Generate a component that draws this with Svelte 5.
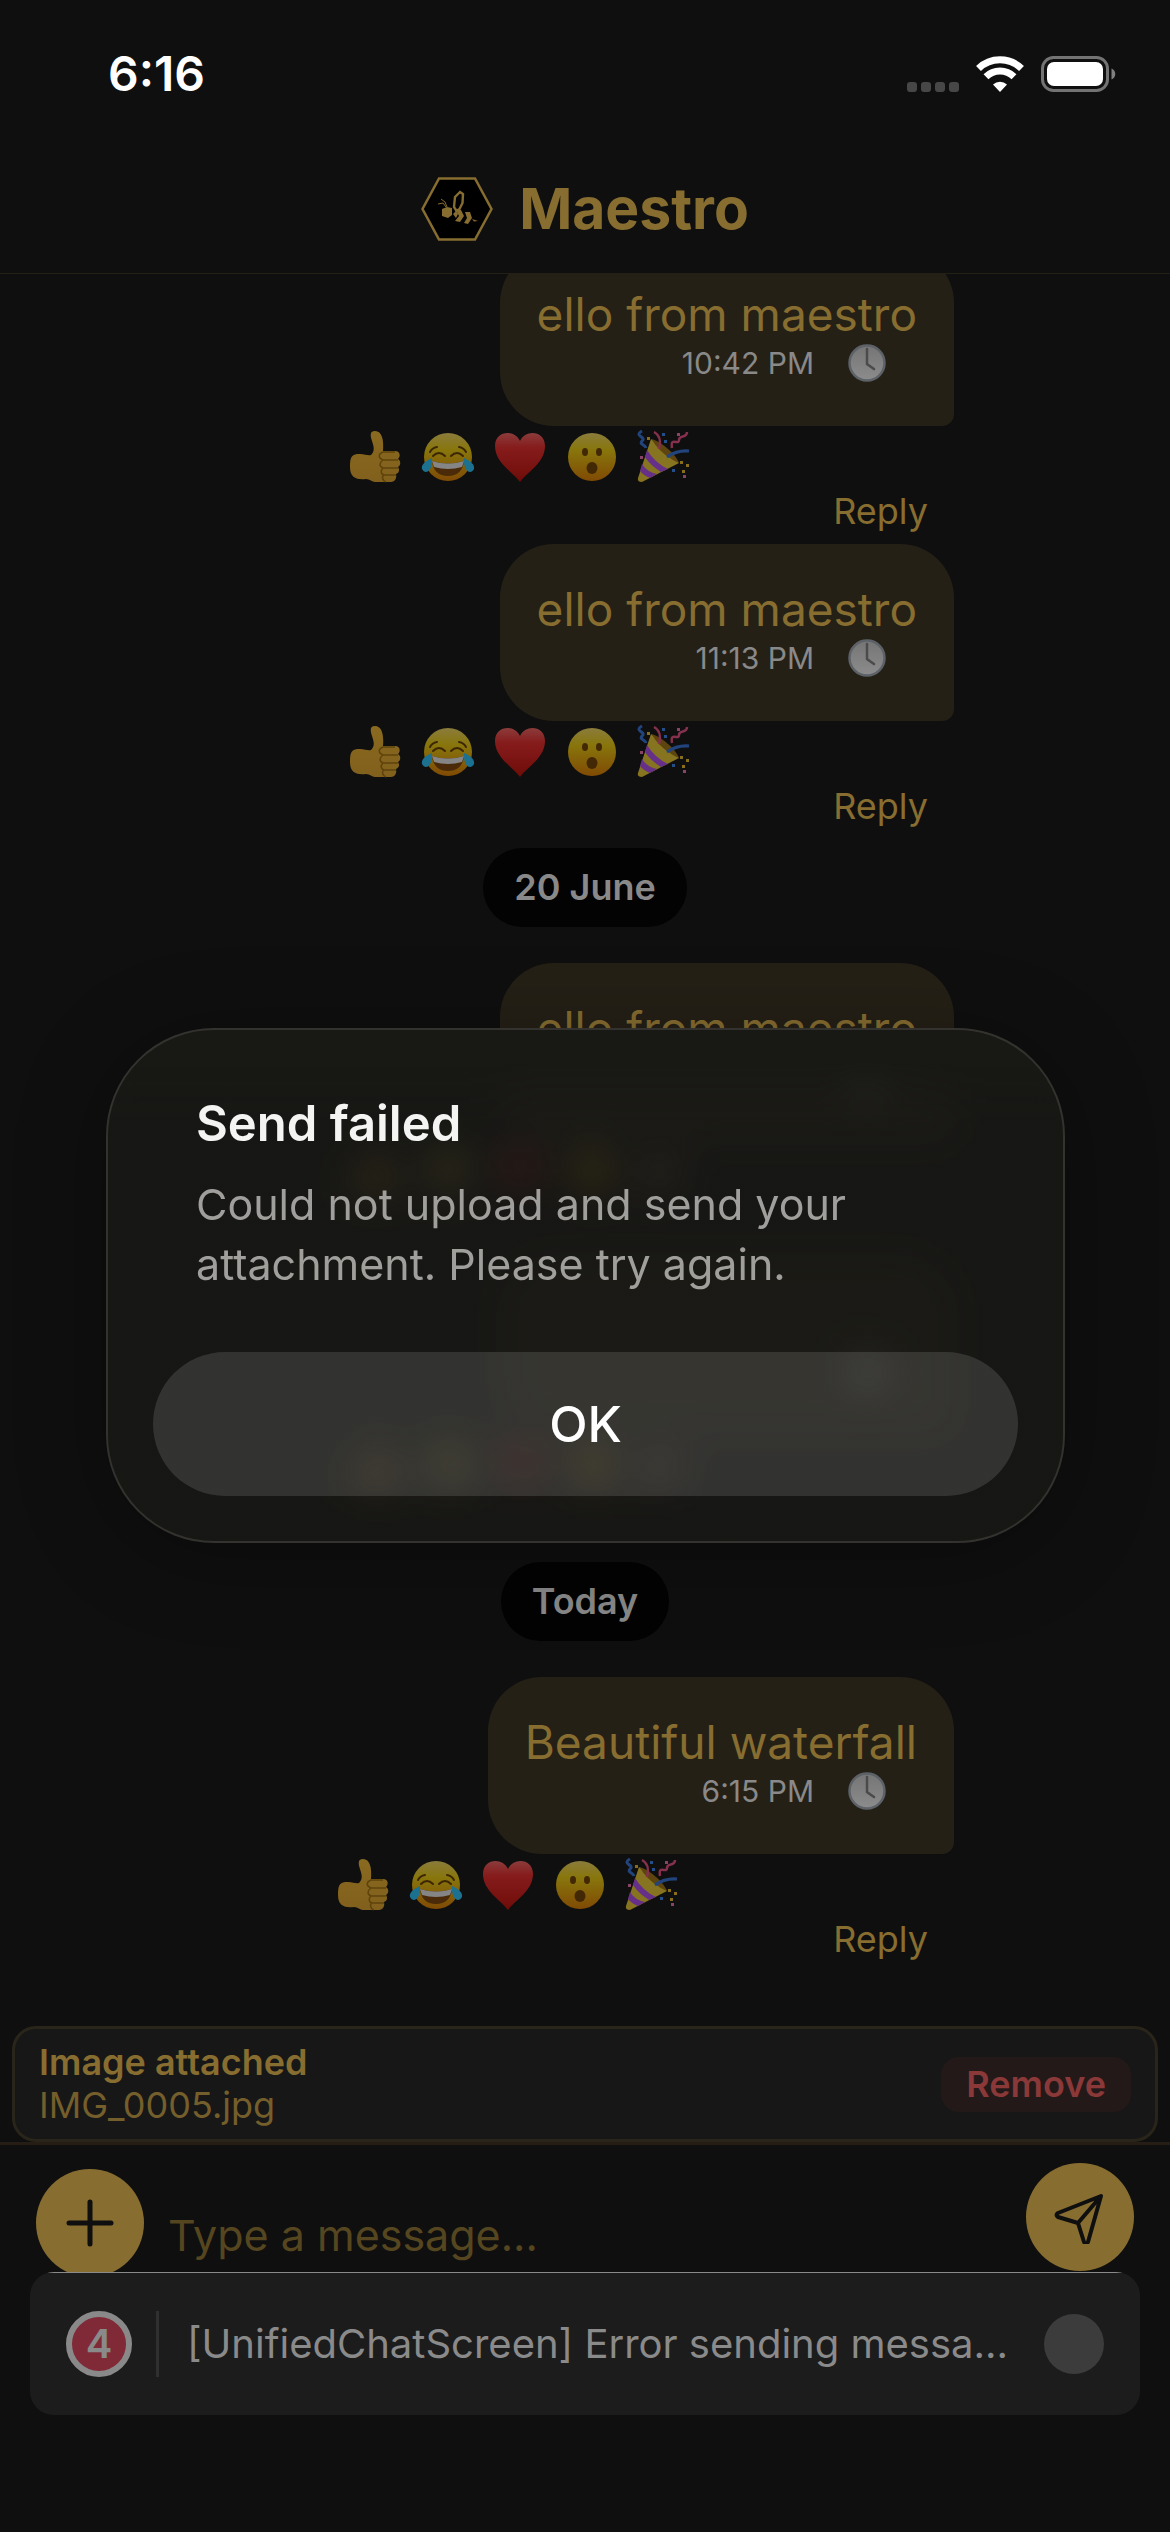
<script lang="ts">
  interface Message {
    text?: string;
    time?: string;
    canReply?: boolean;
  }

  interface Day {
    label?: string;
    messages: Message[];
  }

  const days: Day[] = [
    {
      messages: [
        { text: "ello from maestro", time: "10:42 PM", canReply: true },
        { text: "ello from maestro", time: "11:13 PM", canReply: true },
      ],
    },
    {
      label: "20 June",
      messages: [{ text: "ello from maestro" }, {}],
    },
    {
      label: "Today",
      messages: [
        { text: "Beautiful waterfall", time: "6:15 PM", canReply: true },
      ],
    },
  ];

  const reactions = ["like", "laugh", "love", "wow", "celebrate"];

  let draft = $state("");
</script>

<!-- shared gradients for the reaction faces -->
<svg class="defs" width="0" height="0" aria-hidden="true">
  <defs>
    <linearGradient id="face" x1="0" y1="0" x2="0" y2="1">
      <stop offset="0" stop-color="#8a7c3c" />
      <stop offset="0.35" stop-color="#88760c" />
      <stop offset="1" stop-color="#804a04" />
    </linearGradient>
    <linearGradient id="thumb" x1="0" y1="0" x2="0" y2="1">
      <stop offset="0" stop-color="#8a6a20" />
      <stop offset="1" stop-color="#80601c" />
    </linearGradient>
    <linearGradient id="heart" x1="0" y1="0" x2="0" y2="1">
      <stop offset="0" stop-color="#8c3c3c" />
      <stop offset="0.3" stop-color="#861c1c" />
      <stop offset="1" stop-color="#6e0c08" />
    </linearGradient>
    <linearGradient id="dial" x1="0" y1="0" x2="0" y2="1">
      <stop offset="0" stop-color="#757575" />
      <stop offset="1" stop-color="#8c8c8c" />
    </linearGradient>
  </defs>
</svg>

<div class="screen">
  <div class="status-bar">
    <span class="clock">6:16</span>
    <div class="indicators">
      <svg width="52" height="10" viewBox="0 0 52 10" fill="#474747">
        <rect width="10" height="10" rx="3" />
        <rect x="14" width="10" height="10" rx="3" />
        <rect x="28" width="10" height="10" rx="3" />
        <rect x="42" width="10" height="10" rx="3" />
      </svg>
      <svg width="50" height="36" viewBox="0 0 50 36" fill="none" stroke="#fff">
        <path d="M3.500 12.500a31 31 0 0 1 43 0" stroke-width="7" />
        <path d="M11 20.800a20 20 0 0 1 28 0" stroke-width="7" />
        <path d="M25 36l-7-7.500a10.500 10.500 0 0 1 14 0z" fill="#fff" stroke="none" />
      </svg>
      <svg width="75" height="36" viewBox="0 0 75 36">
        <rect x="1.500" y="1.500" width="65" height="33" rx="11" fill="none" stroke="#737373" stroke-width="3" />
        <rect x="6" y="6" width="56" height="24" rx="7" fill="#fff" />
        <path d="M70.500 12.500c5 2 5 9 0 11z" fill="#808080" />
      </svg>
    </div>
  </div>

  <header>
    <svg width="72" height="64" viewBox="0 0 72 64">
      <path d="M18 1.500h36L70.500 32 54 62.500H18L1.500 32z" fill="#000" stroke="#876d30" stroke-width="2.500" />
      <path d="M39 15l3 2-.5 9-3 6-3 2-2.500-4 1-10z" fill="none" stroke="#876d30" stroke-width="2.400" />
      <path d="M21 32l5-2 5 1v7l-4 3-6-2z" fill="#876d30" />
      <path d="M20 22l4 3 2 5M17 27l5-1 3 4" fill="none" stroke="#876d30" stroke-width="1" />
      <path d="M32 37l3-3 2 3-2 4zM35 33h5l3 6-4 6-5-1 4-5zM44 35h5l2 6-4 6-4-1 3-5zM51 42l6 2-4 .5z" fill="#876d30" />
    </svg>
    <h1>Maestro</h1>
  </header>

  <main>
    {#each days as day}
      {#if day.label}
        <div class="date">{day.label}</div>
      {/if}
      {#each day.messages as message}
        <article>
          <div class="bubble">
            <p>{message.text ?? ""}</p>
            <div class="meta">
              {#if message.time}
                <time>{message.time}</time>
              {/if}
              <svg width="38" height="38" viewBox="0 0 38 38">
                <circle cx="19" cy="19" r="17.500" fill="url(#dial)" stroke="#5d6268" stroke-width="2.500" />
                <path d="M19 5v15l7 5" fill="none" stroke="#4b4b4b" stroke-width="2.500" stroke-linecap="round" />
              </svg>
            </div>
          </div>
          <div class="reactions">
            {#each reactions as name}
              <button aria-label={name}>
                <svg width="54" height="54" viewBox="0 0 54 54">
                  {#if name === "like"}
                    <path
                      d="M22 25c4-4 3-8 1-14-2-6-2-10 3-10 7 0 9 9 8 20h12c5 0 6 5 3 8 3 2 3 6 0 8 2 3 1 6-2 7 1 4-1 8-5 8H26c-3 0-5-3-9-3-9 1-16-1-16-12 0-11 2-13 10-13 5 0 8 2 11 1z"
                      fill="url(#thumb)"
                    />
                    <path
                      d="M46 22H34c-5 2-5 6 0 8h15M34 30c-4 3-4 6 0 8h15M34 38c-3 3-2 6 1 7h12M35 45c-3 2-1 6 2 7"
                      fill="none"
                      stroke="#5f430b"
                      stroke-width="1.500"
                    />
                  {:else if name === "laugh"}
                    <circle cx="27" cy="27" r="24" fill="url(#face)" />
                    <path
                      d="M9 22q2-4 7-5M45 22q-2-4-7-5M12 26q6-6 12 0M30 26q6-6 12 0"
                      fill="none"
                      stroke="#3d2703"
                      stroke-width="2"
                      stroke-linecap="round"
                    />
                    <path d="M11 31q16 5 32 0c-1 10-7 15-16 15s-15-5-16-15z" fill="#4a2a08" />
                    <path d="M11 31q16 5 32 0l-2 6q-14 4-28 0z" fill="#858585" />
                    <path d="M11 28c-7 3-11 7-10 11 3 6 11 3 10-11zM43 28c7 3 11 7 10 11-3 6-11 3-10-11z" fill="#1c7090" />
                  {:else if name === "love"}
                    <path d="M27 52C20 42 2 33 2 16 2 0 22-1 27 11 32-1 52 0 52 16c0 17-18 26-25 36z" fill="url(#heart)" />
                  {:else if name === "wow"}
                    <circle cx="27" cy="27" r="24" fill="url(#face)" />
                    <ellipse cx="20" cy="22" rx="3" ry="4" fill="#422804" />
                    <ellipse cx="34" cy="22" rx="3" ry="4" fill="#422804" />
                    <ellipse cx="27" cy="38" rx="5.500" ry="6" fill="#422804" />
                  {:else}
                    <path d="M14 9l28 24L5 52q-5 0-4-4z" fill="#877420" />
                    <path
                      d="M10 20q8 13 21 19l-7 3Q13 35 8 27zM5 34q5 8 15 10l-7 4Q6 45 3 41z"
                      fill="#663088"
                    />
                    <path d="M15 9c9 3 23 14 27 24-8-3-23-14-27-24z" fill="#5e4510" />
                    <path
                      d="M17 2c6 3 7 10 5 17M35 18c-2-12 7-2 7-8 0-6 8-1 8-8"
                      fill="none"
                      stroke="#85304c"
                      stroke-width="2.500"
                    />
                    <path d="M5 1c-9 5 5 6 0 10-3 4 3 3 4 7M30 27q10-7 22-6" fill="none" stroke="#21447c" stroke-width="3" />
                    <path d="M10 7h3v3h-3zM43 31h3v3h-3zM45 40h3v3h-3zM49 34h3v3h-3z" fill="#876d1c" />
                    <path d="M27 10h3v3h-3zM35 39h3v3h-3zM25 3h3v3h-3z" fill="#234e89" />
                    <path d="M40 3h3v3h-3zM46 45h3v3h-3zM3 26h3v3H3z" fill="#894465" />
                  {/if}
                </svg>
              </button>
            {/each}
          </div>
          <div class="actions">
            {#if message.canReply}
              <button>Reply</button>
            {/if}
          </div>
        </article>
      {/each}
    {/each}
  </main>

  <section class="attachment">
    <div>
      <strong>Image attached</strong>
      <span>IMG_0005.jpg</span>
    </div>
    <button>Remove</button>
  </section>

  <form class="composer" onsubmit={(e) => e.preventDefault()}>
    <button class="round add" type="button" aria-label="Add attachment">
      <svg width="60" height="60" viewBox="0 0 60 60" stroke="#0f0f0f" stroke-width="5" stroke-linecap="round">
        <path d="M30 9v42M9 30h42" />
      </svg>
    </button>
    <input bind:value={draft} placeholder="Type a message..." aria-label="Message" />
    <button class="round" aria-label="Send">
      <svg width="54" height="54" viewBox="0 0 54 54" fill="none" stroke="#0f0f0f" stroke-width="4" stroke-linejoin="round">
        <path d="M48 6L5 23q-3 2 0 4l20 6 6 19q2 3 4 0zM48 6L25 33" />
      </svg>
    </button>
  </form>

  <div class="log" role="status">
    <span class="count">4</span>
    <span class="log-text">[UnifiedChatScreen] Error sending messa...</span>
    <button aria-label="Dismiss"></button>
  </div>

  <div class="overlay">
    <div class="alert" role="alertdialog" aria-labelledby="alert-title" aria-describedby="alert-text">
      <h2 id="alert-title">Send failed</h2>
      <p id="alert-text">Could not upload and send your attachment. Please try again.</p>
      <button>OK</button>
    </div>
  </div>
</div>

<style>
  :global(body) {
    margin: 0;
    background: #0f0f0f;
  }
  .defs {
    position: absolute;
  }
  .screen {
    position: relative;
    display: flex;
    flex-direction: column;
    height: 100vh;
    box-sizing: border-box;
    padding-bottom: 117px;
    background: #0f0f0f;
    color: #876d30;
    font-family: Inter, "Liberation Sans", sans-serif;
    overflow: hidden;
  }
  svg {
    display: block;
  }
  p,
  h1,
  h2 {
    margin: 0;
  }
  button {
    padding: 0;
    border: none;
    background: none;
    color: inherit;
    font: inherit;
  }
  .status-bar {
    display: flex;
    justify-content: space-between;
    align-items: center;
    padding: 44px 54px 0 108px;
    color: #fff;
  }
  .clock {
    font-size: 48px;
    line-height: 60px;
    font-weight: 600;
  }
  .indicators {
    display: flex;
    align-items: flex-end;
    gap: 16px;
  }
  header {
    display: flex;
    justify-content: center;
    align-items: center;
    gap: 26px;
    height: 170px;
    flex-shrink: 0;
    box-sizing: border-box;
    padding-top: 40px;
    border-bottom: 1px solid #252016;
  }
  h1 {
    font-size: 57px;
    line-height: 64px;
    font-weight: 700;
  }
  /* the list is anchored to its newest message */
  main {
    flex: 1;
    min-height: 0;
    display: flex;
    flex-direction: column;
    justify-content: flex-end;
    overflow: hidden;
    padding: 0 216px 54px;
  }
  .date {
    align-self: center;
    flex-shrink: 0;
    margin: 9px 0 36px;
    padding: 0 31px;
    border-radius: 40px;
    background: #030303;
    color: #898989;
    font-size: 36px;
    line-height: 79px;
    font-weight: 600;
  }
  article {
    display: flex;
    flex-direction: column;
    align-self: flex-end;
    flex-shrink: 0;
  }
  .bubble {
    box-sizing: border-box;
    height: 177px;
    min-width: 453px;
    padding: 35px 37px 0;
    border-radius: 54px 54px 12px 54px;
    background: #252016;
    font-size: 46px;
    line-height: 60px;
  }
  .bubble p {
    min-height: 60px;
  }
  .meta {
    display: flex;
    justify-content: flex-end;
    align-items: center;
    gap: 34px;
    padding-right: 31px;
    color: #898989;
    font-size: 30px;
    line-height: 38px;
  }
  .reactions {
    display: flex;
    gap: 18px;
    margin: 4px 0 0 -151px;
  }
  .actions {
    display: flex;
    justify-content: flex-end;
    height: 60px;
    padding-right: 26px;
    font-size: 36px;
    line-height: 54px;
  }
  .actions button {
    align-self: flex-start;
  }
  .attachment {
    display: flex;
    justify-content: space-between;
    align-items: center;
    margin: 0 12px;
    padding: 12px 24px;
    border: 3px solid #2a251a;
    border-radius: 24px;
    background: #171717;
    font-size: 36px;
    line-height: 43px;
  }
  .attachment div {
    display: flex;
    flex-direction: column;
  }
  .attachment strong {
    font-weight: 600;
  }
  .attachment span {
    color: #745e2b;
  }
  .attachment button {
    padding: 6px 25px;
    border-radius: 18px;
    background: #241919;
    color: #8a3838;
    font-weight: 600;
  }
  .composer {
    display: flex;
    align-items: flex-start;
    gap: 24px;
    height: 130px;
    flex-shrink: 0;
    box-sizing: border-box;
    padding: 18px 36px 0;
    border-top: 3px solid #261e14;
  }
  .round {
    display: flex;
    justify-content: center;
    align-items: center;
    flex-shrink: 0;
    width: 108px;
    height: 108px;
    border-radius: 50%;
    background: #876d30;
  }
  .add {
    margin-top: 6px;
  }
  input {
    flex: 1;
    min-width: 0;
    margin-top: 44px;
    padding: 0;
    border: none;
    outline: none;
    background: none;
    color: #876d30;
    font-family: inherit;
    font-size: 43px;
    line-height: 56px;
  }
  input::placeholder {
    color: #554620;
    opacity: 1;
  }
  .log {
    position: relative;
    display: flex;
    align-items: center;
    margin: 0 30px;
    padding: 0 36px;
    min-height: 143px;
    border-radius: 24px;
    background: linear-gradient(#8a8a8a 1px, #1c1c1c 1px);
    color: #8a8a8a;
  }
  .count {
    display: flex;
    justify-content: center;
    align-items: center;
    width: 54px;
    height: 54px;
    border: 6px solid #898989;
    border-radius: 50%;
    background: #802a38;
    font-size: 40px;
    font-weight: 600;
  }
  .log-text {
    flex: 1;
    min-width: 0;
    margin-left: 24px;
    padding-left: 28px;
    border-left: 3px solid #303030;
    white-space: nowrap;
    font-size: 40px;
    line-height: 66px;
  }
  .log button {
    width: 60px;
    height: 60px;
    border-radius: 50%;
    background: #3c3c3c;
  }
  .overlay {
    position: absolute;
    inset: 0;
    display: flex;
    justify-content: center;
    align-items: center;
    padding: 38px 105px 0 106px;
  }
  .alert {
    flex: 1;
    box-sizing: border-box;
    padding: 64px 45px 45px;
    border: 2px solid #33322e;
    border-radius: 108px;
    background: linear-gradient(#181815 32px, rgba(25, 25, 22, 0.82) 90px);
    background-origin: border-box;
    backdrop-filter: blur(18px);
    box-shadow: 0 12px 90px rgba(0, 0, 0, 0.3);
    color: #a09f9c;
  }
  .alert h2,
  .alert p {
    padding: 0 43px;
  }
  h2 {
    color: #f4f4f2;
    font-size: 49px;
    line-height: 60px;
    font-weight: 600;
  }
  .alert p {
    margin: 20px 0 58px;
    font-size: 43px;
    line-height: 60px;
  }
  .alert button {
    display: block;
    width: 100%;
    border-radius: 72px;
    background: rgba(255, 255, 255, 0.12);
    color: #fff;
    font-size: 50px;
    line-height: 144px;
    font-weight: 500;
  }
</style>
